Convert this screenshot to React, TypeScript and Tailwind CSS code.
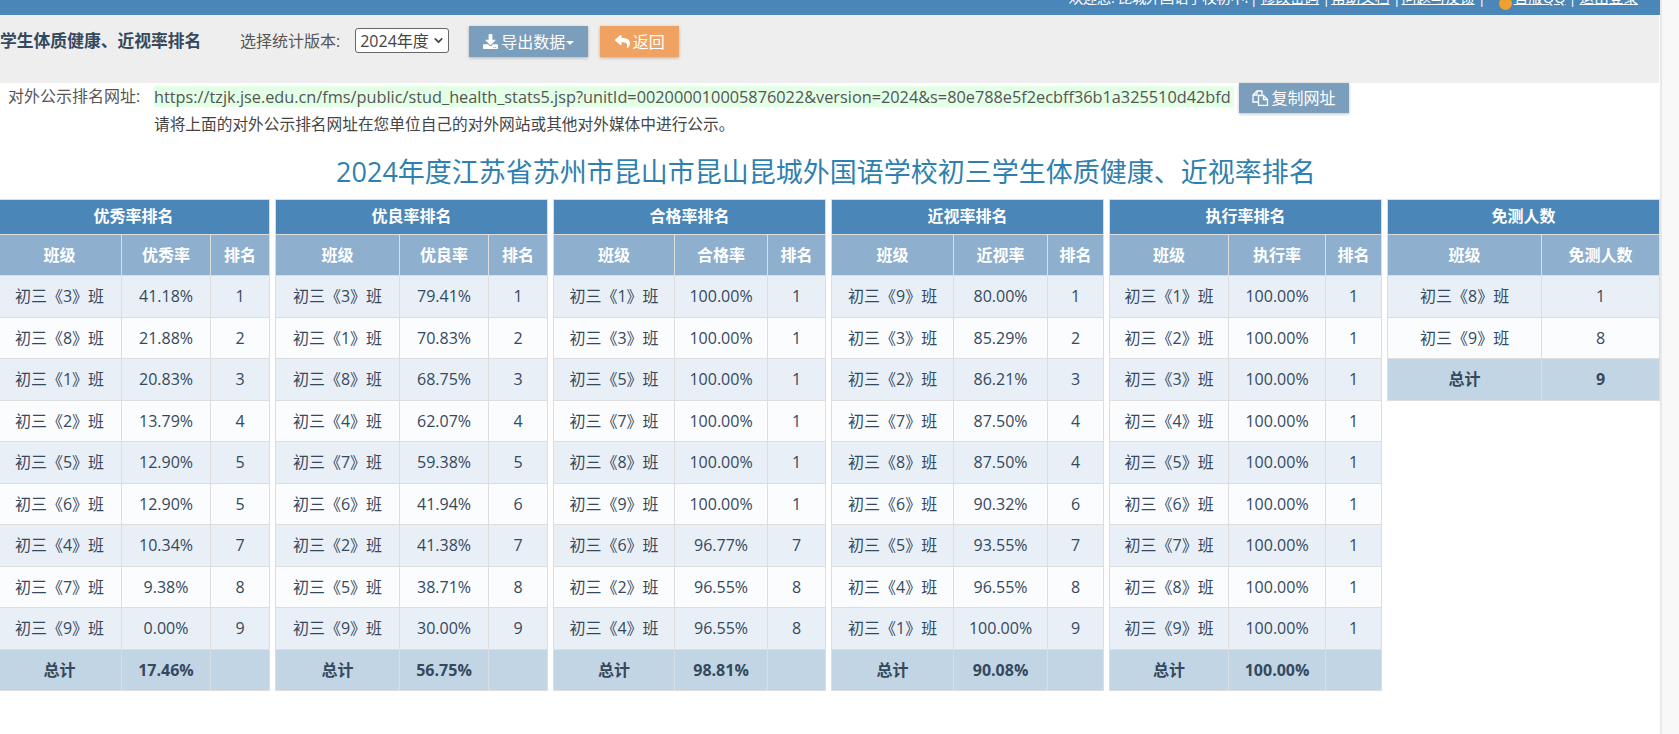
import React from 'react';
import { ChevronDown } from 'lucide-react';
import { FaDownload, FaReply } from 'react-icons/fa';

const fontStack = "font-['Open_Sans','Noto_Sans_CJK_SC',sans-serif]";

const tables = [
  {
    title: '优秀率排名',
    label: '优秀率',
    cols: ['w-[124px]', 'w-[89px]', 'w-[59px]'],
    total: '17.46%',
    rows: [
      ['3', '41.18%', 1],
      ['8', '21.88%', 2],
      ['1', '20.83%', 3],
      ['2', '13.79%', 4],
      ['5', '12.90%', 5],
      ['6', '12.90%', 5],
      ['4', '10.34%', 7],
      ['7', '9.38%', 8],
      ['9', '0.00%', 9],
    ],
  },
  {
    title: '优良率排名',
    label: '优良率',
    cols: ['w-[124px]', 'w-[89px]', 'w-[59px]'],
    total: '56.75%',
    rows: [
      ['3', '79.41%', 1],
      ['1', '70.83%', 2],
      ['8', '68.75%', 3],
      ['4', '62.07%', 4],
      ['7', '59.38%', 5],
      ['6', '41.94%', 6],
      ['2', '41.38%', 7],
      ['5', '38.71%', 8],
      ['9', '30.00%', 9],
    ],
  },
  {
    title: '合格率排名',
    label: '合格率',
    cols: ['w-[121px]', 'w-[93px]', 'w-[58px]'],
    total: '98.81%',
    rows: [
      ['1', '100.00%', 1],
      ['3', '100.00%', 1],
      ['5', '100.00%', 1],
      ['7', '100.00%', 1],
      ['8', '100.00%', 1],
      ['9', '100.00%', 1],
      ['6', '96.77%', 7],
      ['2', '96.55%', 8],
      ['4', '96.55%', 8],
    ],
  },
  {
    title: '近视率排名',
    label: '近视率',
    cols: ['w-[122px]', 'w-[94px]', 'w-[56px]'],
    total: '90.08%',
    rows: [
      ['9', '80.00%', 1],
      ['3', '85.29%', 2],
      ['2', '86.21%', 3],
      ['7', '87.50%', 4],
      ['8', '87.50%', 4],
      ['6', '90.32%', 6],
      ['5', '93.55%', 7],
      ['4', '96.55%', 8],
      ['1', '100.00%', 9],
    ],
  },
  {
    title: '执行率排名',
    label: '执行率',
    cols: ['w-[119px]', 'w-[97px]', 'w-[56px]'],
    total: '100.00%',
    rows: ['1', '2', '3', '4', '5', '6', '7', '8', '9'].map((c) => [c, '100.00%', 1]),
  },
];

const cell = 'border border-[#dddddd] text-center align-middle p-0';

const ClassName = ({ n }: { n: React.ReactNode }) => <>初三《{n}》班</>;

const StatsTable = ({ t }) => (
  <table className="w-[272px] shrink-0 table-fixed border-collapse">
    <colgroup>
      {t.cols.map((c, i) => (
        <col key={i} className={c} />
      ))}
    </colgroup>
    <thead>
      <tr className="h-[35px] bg-[#4a86b8] text-white font-bold">
        <th colSpan={3} className={cell}><span className="relative -top-px">{t.title}</span></th>
      </tr>
      <tr className="h-[41px] bg-[#8eb0ce] text-white font-bold">
        <th className={cell}>班级</th>
        <th className={cell}>{t.label}</th>
        <th className={cell}>排名</th>
      </tr>
    </thead>
    <tbody>
      {t.rows.map((r, i) => (
        <tr key={i} className={i % 2 === 0 ? 'h-[41.5px] bg-[#e9eff6]' : 'h-[41.5px] bg-[#fbfcfe]'}>
          <td className={cell}><ClassName n={r[0]} /></td>
          <td className={cell}>{r[1]}</td>
          <td className={cell}>{r[2]}</td>
        </tr>
      ))}
      <tr className="h-[41px] bg-[#c2d5e4] font-bold">
        <td className={cell}>总计</td>
        <td className={cell}>{t.total}</td>
        <td className={cell}></td>
      </tr>
    </tbody>
  </table>
);

const ExemptTable = () => (
  <table className="w-[272px] shrink-0 table-fixed border-collapse self-start">
    <colgroup>
      <col className="w-[154px]" />
      <col className="w-[118px]" />
    </colgroup>
    <thead>
      <tr className="h-[35px] bg-[#4a86b8] text-white font-bold">
        <th colSpan={2} className={cell}><span className="relative -top-px">免测人数</span></th>
      </tr>
      <tr className="h-[41px] bg-[#8eb0ce] text-white font-bold">
        <th className={cell}>班级</th>
        <th className={cell}>免测人数</th>
      </tr>
    </thead>
    <tbody>
      <tr className="h-[41.5px] bg-[#e9eff6]">
        <td className={cell}><ClassName n="8" /></td>
        <td className={cell}>1</td>
      </tr>
      <tr className="h-[41.5px] bg-[#fbfcfe]">
        <td className={cell}><ClassName n="9" /></td>
        <td className={cell}>8</td>
      </tr>
      <tr className="h-[41.5px] bg-[#c2d5e4] font-bold">
        <td className={cell}>总计</td>
        <td className={cell}>9</td>
      </tr>
    </tbody>
  </table>
);

const CopyIcon = () => (
  <svg width="17" height="16" viewBox="0 0 17 16" fill="none" stroke="currentColor" strokeWidth="1.3" className="mr-[2px]">
    <path d="M6 12H1V5l4-4h5v4" />
    <path d="M5 1v4H1" />
    <path d="M6.5 5.5h5l4 4v6h-9z" />
    <path d="M11.5 5.5v4h4" />
  </svg>
);

const App = () => {
  return (
    <div className={`flex h-[734px] w-[1679px] overflow-hidden bg-white text-[16px] text-[#34495e] ${fontStack}`}>
      <div className="w-[1660px] shrink-0 overflow-hidden">
        <div className="flex h-[15px] items-start justify-end overflow-hidden bg-[#4a86b8] pr-[22px] text-[14.6px] leading-[20px] text-white">
          <span className="-mt-[13px] flex whitespace-nowrap">
            <span className="tracking-[-0.5px]">欢迎您: 昆城外国语学校初中!</span>
            <span className="ml-[2px]">|</span>
            <u className="ml-[3px]">修改密码</u>
            <span className="ml-[3px]">|</span>
            <u className="ml-[1px]">帮助文档</u>
            <span className="ml-[3px]">|</span>
            <u className="ml-[1px]">问题与反馈</u>
            <span className="ml-[3px]">|</span>
            <span className="ml-[13px] mt-[10px] mr-[2px] size-[13px] rounded-full bg-[#f0a030]" />
            <u>官服QQ</u>
            <span className="ml-[3px]">|</span>
            <u className="ml-[3px]">退出登录</u>
          </span>
        </div>

        <div className="flex h-[68px] w-[1659px] items-start bg-[#eeeeee] pt-[11px]">
          <span className="mt-[3px] w-[201px] text-right text-[16.8px] leading-[24px] font-bold whitespace-nowrap">学生体质健康、近视率排名</span>
          <span className="ml-[39px] mt-[3px] leading-[24px] text-[#555555]">选择统计版本:</span>
          <div className="ml-[15px] mt-[2px] flex h-[25px] w-[94px] items-center justify-between rounded-[3px] border border-[#666666] bg-white pl-[4px] pr-[3px] text-[#444444]">
            2024年度
            <ChevronDown size={13} strokeWidth={3} />
          </div>
          <button className="ml-[20px] flex h-[31px] w-[119px] items-center justify-center bg-[#7b9ebd] text-white shadow-[0_1px_3px_rgba(0,0,0,0.25)]">
            <FaDownload size={15} className="mr-[3px]" />
            导出数据
            <span className="ml-[1px] mt-[2px] border-x-[4px] border-t-[4px] border-x-transparent border-t-white" />
          </button>
          <button className="ml-[12px] flex h-[31px] w-[79px] items-center justify-center bg-[#efa261] text-white shadow-[0_1px_3px_rgba(0,0,0,0.25)]">
            <FaReply size={15} className="mr-[3px]" />
            返回
          </button>
        </div>

        <div className="flex items-start">
          <span className="ml-[8px] mt-[3px] w-[146px] leading-[21px] text-[#555555]">对外公示排名网址:</span>
          <div className="flex flex-col">
            <div className="flex items-start">
              <span className="mt-[3px] w-[1080px] bg-[#e3ffe6] pt-[1px] text-[16.3px] leading-[20px] whitespace-nowrap text-[#555555]">
                https://tzjk.jse.edu.cn/fms/public/stud_health_stats5.jsp?unitId=002000010005876022&amp;version=2024&amp;s=80e788e5f2ecbff36b1a325510d42bfd
              </span>
              <button className="ml-[5px] flex h-[30px] w-[110px] items-center justify-center bg-[#7b9ebd] text-white shadow-[0_1px_3px_rgba(0,0,0,0.25)]">
                <CopyIcon />
                复制网址
              </button>
            </div>
            <p className="mt-0 text-[15.7px] leading-[22px] text-[#444444]">请将上面的对外公示排名网址在您单位自己的对外网站或其他对外媒体中进行公示。</p>
          </div>
        </div>

        <h1 className="mt-[17px] pr-[8px] text-center text-[27px] leading-[40px] text-[#2f7fb0]">
          2024年度江苏省苏州市昆山市昆山昆城外国语学校初三学生体质健康、近视率排名
        </h1>

        <div className="mt-[7px] ml-[-3px] flex items-start gap-[5px]">
          {tables.map((t) => (
            <StatsTable key={t.title} t={t} />
          ))}
          <ExemptTable />
        </div>
      </div>
      <div className="flex-1 border-l-2 border-[#e8e8e8] bg-[#f8f8f8]" />
    </div>
  );
};

export default App;
